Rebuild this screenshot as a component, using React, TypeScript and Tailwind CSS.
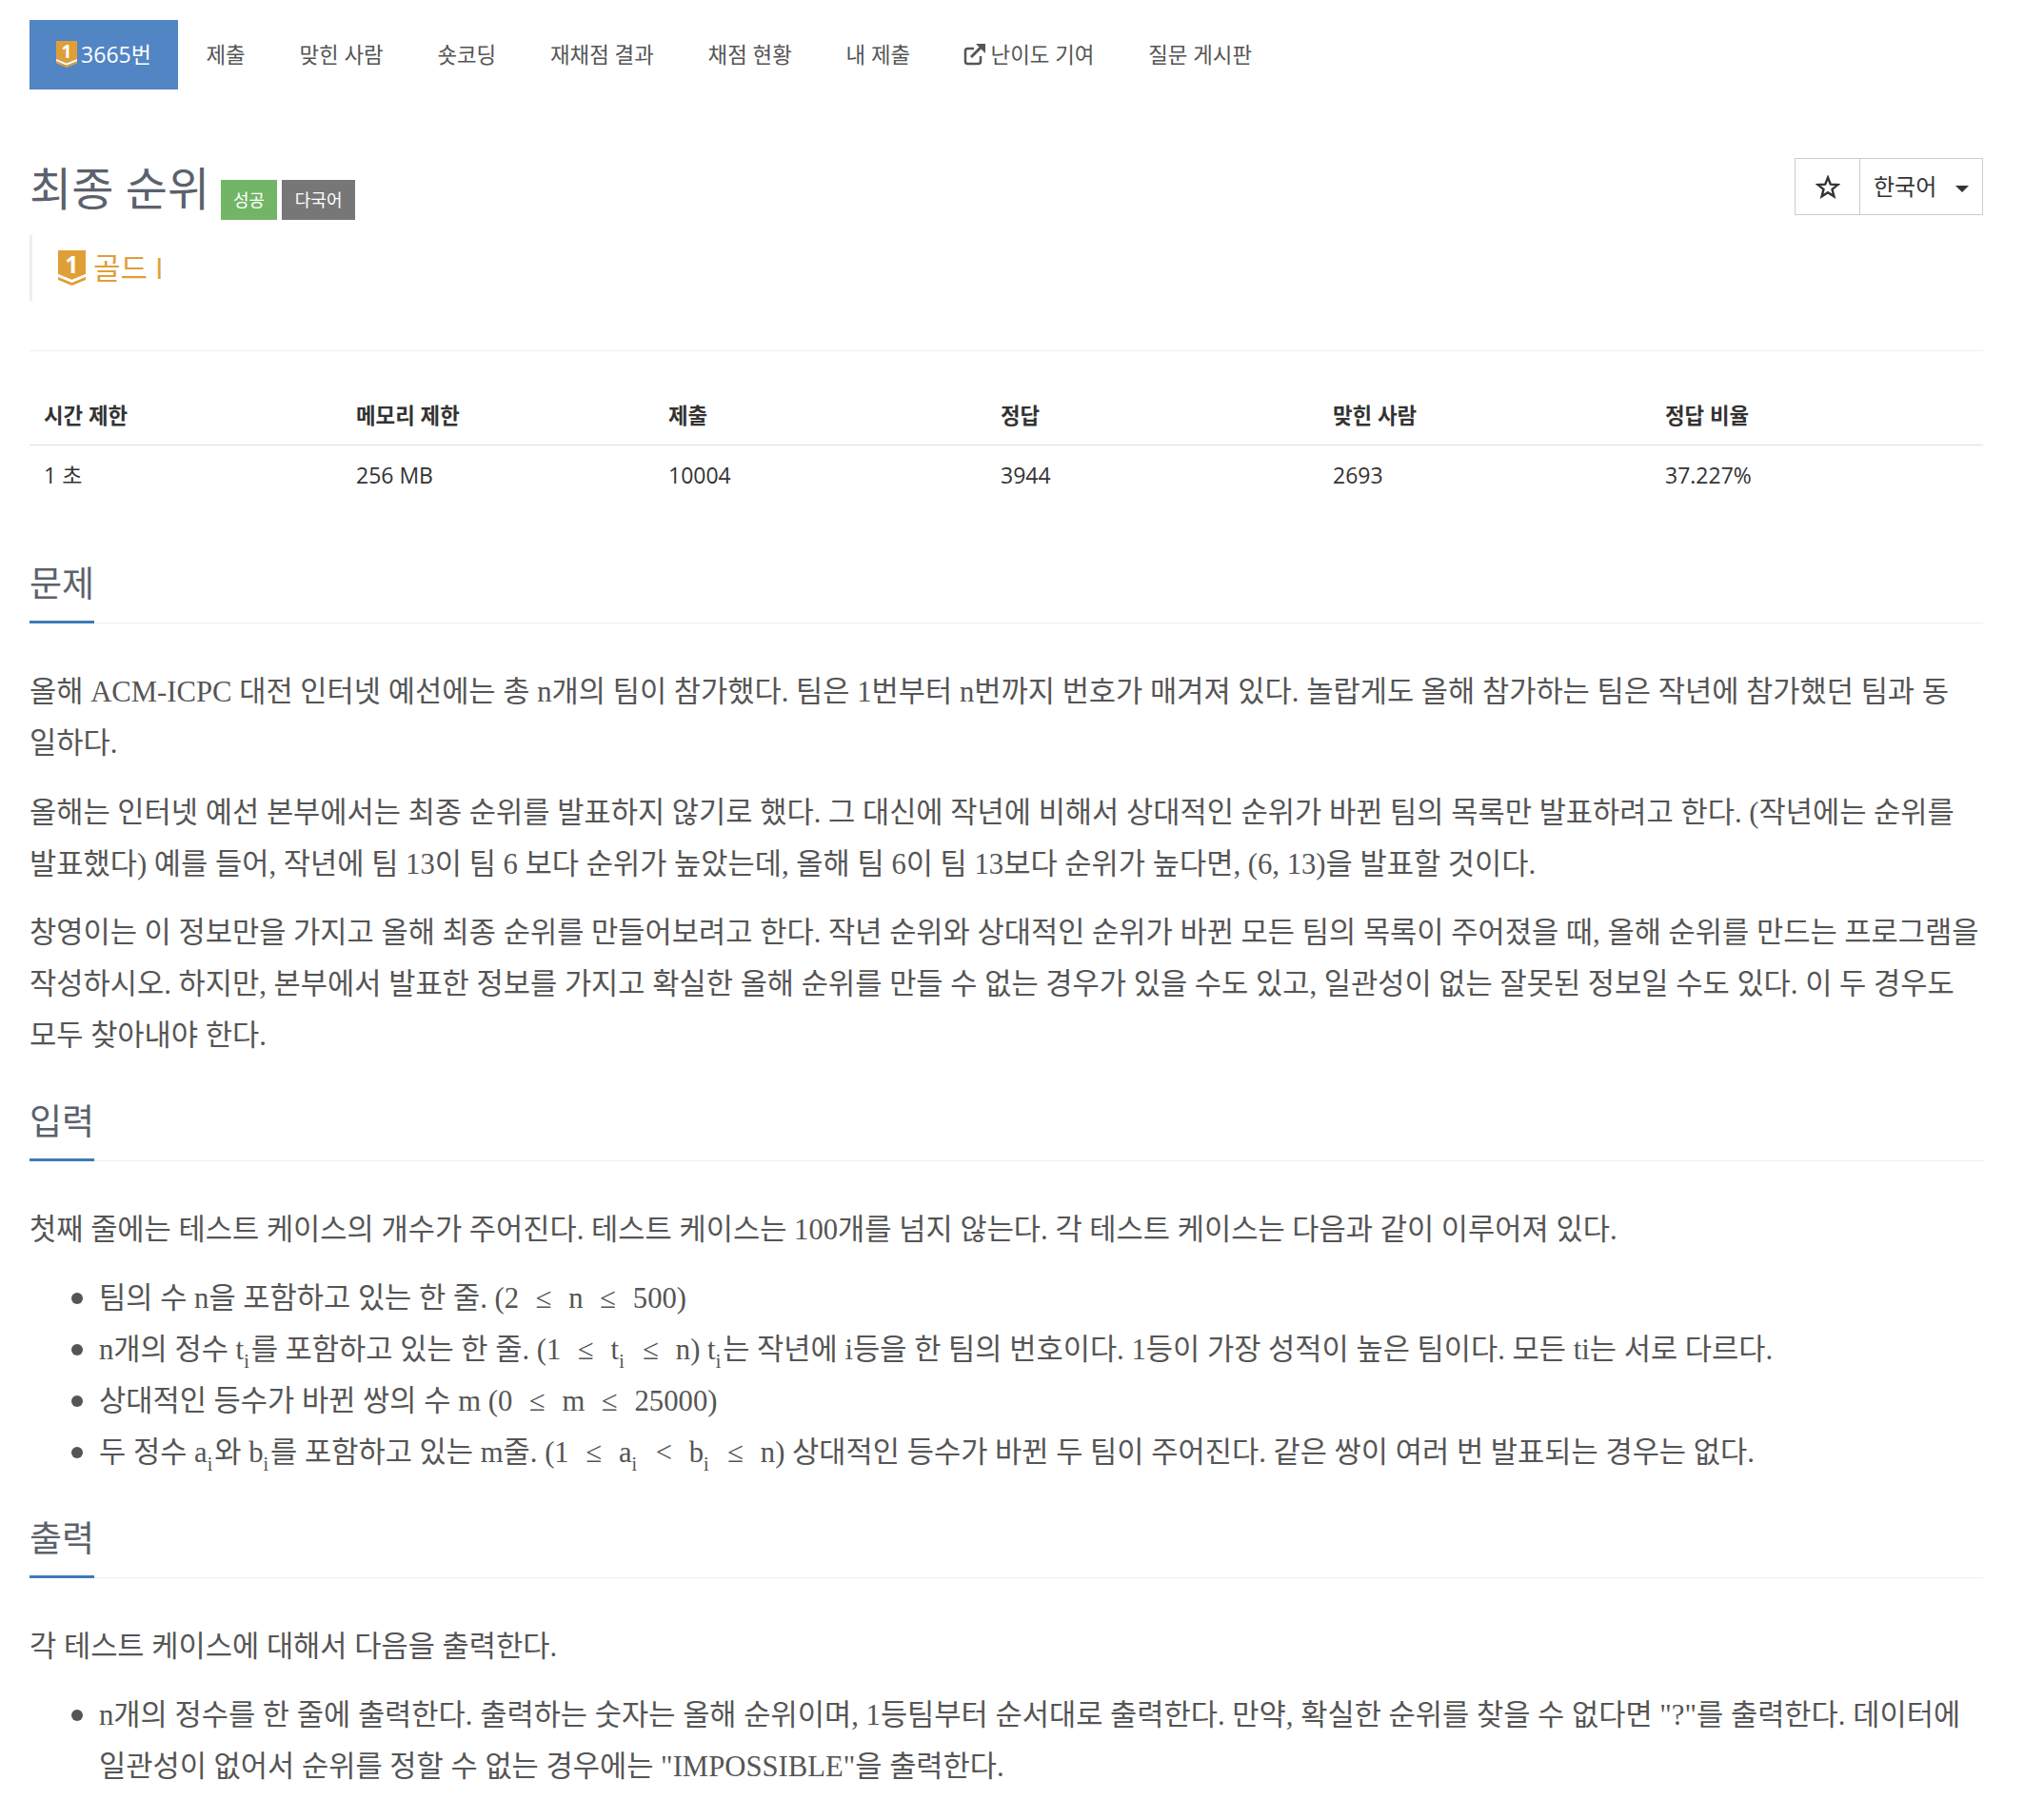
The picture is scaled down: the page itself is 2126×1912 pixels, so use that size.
const sansFont = "font-['Open_Sans','Noto_Sans_CJK_KR',sans-serif]";
const bodyText = "font-['Liberation_Serif','Noto_Sans_CJK_KR',serif] text-[30.7px] leading-[54px] text-[#555]";

const Tier = ({ size }: { size: number }) => (
  <svg width={size} height={(size * 37) / 29} viewBox="0 0 29 37" className="shrink-0 overflow-visible">
    <path d="M0 0H29V25L14.5 31L0 25Z" fill="#e09e37" />
    <path d="M0 25L14.5 31L29 25V28L14.5 34L0 28Z" fill="#fff" />
    <path d="M0 28L14.5 34L29 28V31L14.5 37L0 31Z" fill="#e09e37" />
    <text x="14.5" y="24" textAnchor="middle" fontSize="25" fontWeight="700" fill="#fff" fontFamily="Open Sans, sans-serif">1</text>
  </svg>
);

const tabs = ["제출", "맞힌 사람", "숏코딩", "재채점 결과", "채점 현황", "내 제출"];

const Heading = ({ children }: { children: string }) => (
  <div className="border-b border-[#eee] leading-none">
    <h2 className={`inline-block border-b-[3px] border-[#3e7ab8] pb-[14px] -mb-px text-[37px] leading-[50px] text-[#5b626c] ${sansFont}`}>
      {children}
    </h2>
  </div>
);

const Sub = ({ children }: { children: string }) => (
  <sub className="pr-[2px] text-[20px] leading-none align-[-4px]">{children}</sub>
);

// inline formulas sit wider than the running text
const Formula = ({ children }: { children: React.ReactNode }) => (
  <span className="[word-spacing:10px]">{children}</span>
);

const Li = ({ children }: { children: React.ReactNode }) => (
  <li className="flex">
    <span className="w-[73px] shrink-0 pr-[17px] flex justify-end pt-[21px]">
      <span className="block h-[12px] w-[12px] rounded-full bg-[#555]" />
    </span>
    <span>{children}</span>
  </li>
);

export default function App() {
  return (
    <div className={`w-[2126px] h-[1912px] overflow-hidden bg-white pl-[31px] pr-[43px] pt-[21px] ${sansFont}`}>
      <nav className="flex h-[73px] items-center text-[22.4px] text-[#555]">
        <a className="flex h-full w-[156px] items-center justify-center gap-[4px] bg-[#5285c4] text-white">
          <Tier size={22} />
          <span className="text-[23px]">3665번</span>
        </a>
        <div className="flex pl-px">
          {tabs.map((t) => (
            <a key={t} className="px-[28.4px]">{t}</a>
          ))}
          <a className="flex items-center gap-[6px] pl-[26px] pr-[28.4px]">
            <svg width="24" height="24" viewBox="0 0 24 24" fill="none" stroke="#555" strokeWidth="2.5">
              <path d="M12 6H5.5A2.5 2.5 0 0 0 3 8.5V19.5A2.5 2.5 0 0 0 5.5 22H16.5A2.5 2.5 0 0 0 19 19.5V14" />
              <path d="M9 15L19 5" strokeWidth="3" />
              <path d="M14 1H24V11Z" fill="#555" stroke="none" />
            </svg>
            난이도 기여
          </a>
          <a className="px-[28.4px]">질문 게시판</a>
        </div>
      </nav>

      <div className="mt-[72px] flex items-start justify-between">
        <div className="flex h-[65px] items-end gap-[12px]">
          <h1 className="mb-[4px] text-[48px] leading-[58px] text-[#5b626c]">최종 순위</h1>
          <div className="flex gap-[5px]">
            <span className="flex h-[42px] w-[59px] items-center justify-center bg-[#72b566] text-[18px] text-white">성공</span>
            <span className="flex h-[42px] w-[77px] items-center justify-center bg-[#777] text-[18px] text-white">다국어</span>
          </div>
        </div>
        <div className="flex h-[60px] border border-[#ccc] text-[24px] text-[#333]">
          <span className="flex w-[68px] items-center justify-center border-r border-[#ccc]">
            <svg width="26" height="25" viewBox="0 0 26 25" fill="none" stroke="#333" strokeWidth="2.4">
              <path d="M13 2.5L15.8 9.6L23.4 10.1L17.5 14.9L19.4 22.3L13 18.2L6.6 22.3L8.5 14.9L2.6 10.1L10.2 9.6Z" />
            </svg>
          </span>
          <span className="flex w-[128px] items-center pl-[14px]">
            한국어
            <span className="ml-[20px] mt-[4px] h-0 w-0 border-x-[7px] border-t-[7px] border-x-transparent border-t-[#333]" />
          </span>
        </div>
      </div>

      <div className="mt-[16px] flex h-[69px] items-center gap-[8px] border-l-[3px] border-[#eee] pl-[27px] text-[31px] text-[#e09e37]">
        <Tier size={29} />
        <span>골드 I</span>
      </div>

      <hr className="mt-[52px] border-[#eee]" />

      <table className="mt-[51px] w-full table-fixed text-[23px] text-[#333]">
        <thead>
          <tr className="border-b border-[#ddd]">
            {["시간 제한", "메모리 제한", "제출", "정답", "맞힌 사람", "정답 비율"].map((h, i) => (
              <th key={h} className={`h-[46px] pb-[13px] pl-[15px] text-left text-[22.4px] font-bold ${i < 2 ? "w-[328px]" : "w-[349px]"}`}>{h}</th>
            ))}
          </tr>
        </thead>
        <tbody>
          <tr>
            {["1 초", "256 MB", "10004", "3944", "2693", "37.227%"].map((c) => (
              <td key={c} className="h-[64px] pl-[15px]">{c}</td>
            ))}
          </tr>
        </tbody>
      </table>

      <div className="mt-[57px]"><Heading>문제</Heading></div>
      <div className={`mt-[45px] ${bodyText}`}>
        <p>올해 ACM-ICPC 대전 인터넷 예선에는 총 n개의 팀이 참가했다. 팀은 1번부터 n번까지 번호가 매겨져 있다. 놀랍게도 올해 참가하는 팀은 작년에 참가했던 팀과 동<br />일하다.</p>
        <p className="mt-[19px]">올해는 인터넷 예선 본부에서는 최종 순위를 발표하지 않기로 했다. 그 대신에 작년에 비해서 상대적인 순위가 바뀐 팀의 목록만 발표하려고 한다. (작년에는 순위를 발표했다) 예를 들어, 작년에 팀 13이 팀 6 보다 순위가 높았는데, 올해 팀 6이 팀 13보다 순위가 높다면, (6, 13)을 발표할 것이다.</p>
        <p className="mt-[18px]">창영이는 이 정보만을 가지고 올해 최종 순위를 만들어보려고 한다. 작년 순위와 상대적인 순위가 바뀐 모든 팀의 목록이 주어졌을 때, 올해 순위를 만드는 프로그램을 작성하시오. 하지만, 본부에서 발표한 정보를 가지고 확실한 올해 순위를 만들 수 없는 경우가 있을 수도 있고, 일관성이 없는 잘못된 정보일 수도 있다. 이 두 경우도 모두 찾아내야 한다.</p>
      </div>

      <div className="mt-[38px]"><Heading>입력</Heading></div>
      <div className={`mt-[45px] ${bodyText}`}>
        <p>첫째 줄에는 테스트 케이스의 개수가 주어진다. 테스트 케이스는 100개를 넘지 않는다. 각 테스트 케이스는 다음과 같이 이루어져 있다.</p>
        <ul className="mt-[18px]">
          <Li>팀의 수 n을 포함하고 있는 한 줄. <Formula>(2 ≤ n ≤ 500)</Formula></Li>
          <Li>n개의 정수 t<Sub>i</Sub>를 포함하고 있는 한 줄. <Formula>(1 ≤ t<Sub>i</Sub> ≤ n)</Formula> t<Sub>i</Sub>는 작년에 i등을 한 팀의 번호이다. 1등이 가장 성적이 높은 팀이다. 모든 ti는 서로 다르다.</Li>
          <Li>상대적인 등수가 바뀐 쌍의 수 m <Formula>(0 ≤ m ≤ 25000)</Formula></Li>
          <Li>두 정수 a<Sub>i</Sub>와 b<Sub>i</Sub>를 포함하고 있는 m줄. <Formula>(1 ≤ a<Sub>i</Sub> &lt; b<Sub>i</Sub> ≤ n)</Formula> 상대적인 등수가 바뀐 두 팀이 주어진다. 같은 쌍이 여러 번 발표되는 경우는 없다.</Li>
        </ul>
      </div>

      <div className="mt-[38px]"><Heading>출력</Heading></div>
      <div className={`mt-[45px] ${bodyText}`}>
        <p>각 테스트 케이스에 대해서 다음을 출력한다.</p>
        <ul className="mt-[18px]">
          <Li>n개의 정수를 한 줄에 출력한다. 출력하는 숫자는 올해 순위이며, 1등팀부터 순서대로 출력한다. 만약, 확실한 순위를 찾을 수 없다면 "?"를 출력한다. 데이터에 일관성이 없어서 순위를 정할 수 없는 경우에는 "IMPOSSIBLE"을 출력한다.</Li>
        </ul>
      </div>
    </div>
  );
}
